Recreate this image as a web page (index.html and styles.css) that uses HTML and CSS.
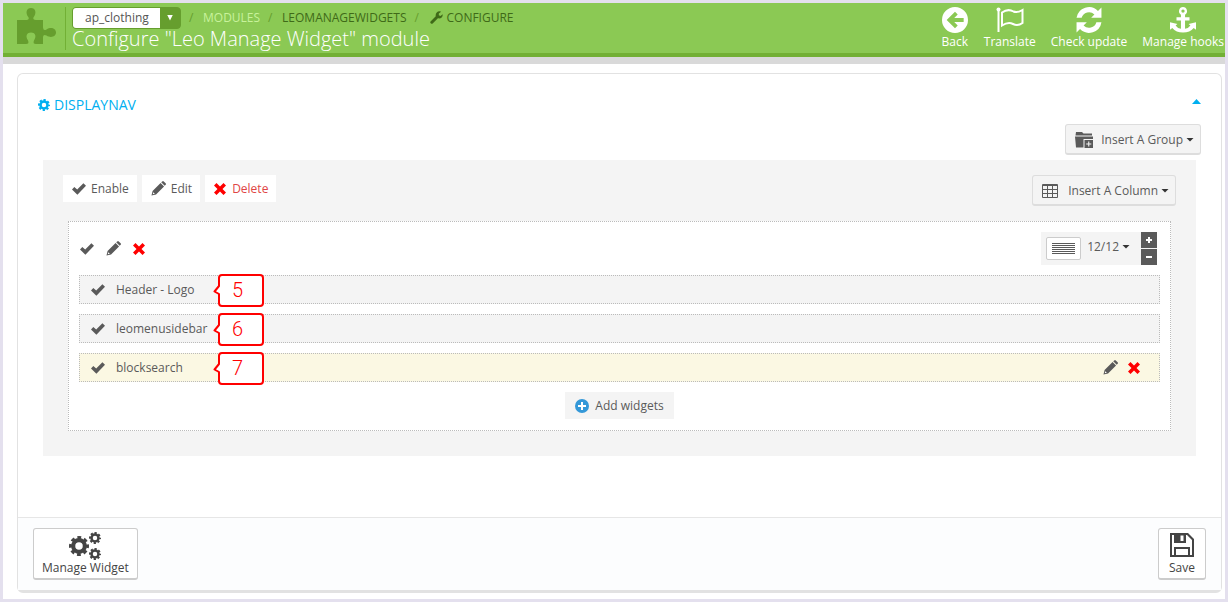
FILE: index.html
```html
<!DOCTYPE html>
<html lang="en">
<head>
    <meta charset="UTF-8">
    <meta name="viewport" content="width=device-width, initial-scale=1.0">
    <title>Configure "Leo Manage Widget" module</title>
    <link rel="stylesheet" href="styles.css">
</head>
<body>

<!-- icon set -->
<svg class="sprite" aria-hidden="true">
    <symbol id="i-check" viewBox="0 0 14 12"><path d="M0 6.600 2.300 4 5.200 6.400 11.400.2 14 2.800 5.400 11.800z"/></symbol>
    <symbol id="i-pencil" viewBox="0 0 16 16"><path d="M.5 15.500 1.700 10.600 10.200 2.100 13.900 5.800 5.400 14.300zM10.900 1.400 12 .4q.8-.7 1.600 0l2 2q.8.900 0 1.700l-1 1z"/><path d="M1.900 14.100l.5-2.200 1.700 1.700z" fill="#fff"/></symbol>
    <symbol id="i-remove" viewBox="0 0 12 12"><path d="M2.500 0 6 3.500 9.500 0 12 2.500 8.500 6 12 9.500 9.500 12 6 8.500 2.500 12 0 9.500 3.500 6 0 2.500z"/></symbol>
    <symbol id="i-gear" viewBox="0 0 24 24"><g fill="none" stroke="currentColor"><circle cx="12" cy="12" r="7" stroke-width="5"/><circle cx="12" cy="12" r="10" stroke-width="4" stroke-dasharray="4.400 3.454" stroke-dashoffset="2.200"/></g></symbol>
    <symbol id="i-wrench" viewBox="0 0 14 14"><path d="M.6 11.200 6.200 5.600C5.600 2.700 7.600.2 10.500.3L12 .7 9.500 2.600V4.500L11.200 5.300 13.700 3.600C14 6.700 11.500 8.700 8.500 7.900L2.900 13.500Q1.800 14.300.8 13.300T.6 11.200z"/></symbol>
    <symbol id="i-puzzle" viewBox="0 0 40 38"><path d="M1 13H10.500Q13.500 13 12.500 10.300C9 6 10.500 1 15 1S21 6 17.500 10.300Q16.500 13 20 13H27V20.500Q27.300 24.300 30.500 22.500C35 19.500 40 21.500 40 25.500S35 31.500 30.500 28.500Q27.300 27 27 30V37H20Q16.500 37 18 33.500C21 29 19 25.500 15 25.500S9 29 12 33.500Q13.500 37 10 37H1z"/></symbol>
    <symbol id="i-back" viewBox="0 0 24 24"><path fill-rule="evenodd" d="M12 0a12 12 0 1 0 0 24 12 12 0 0 0 0-24zM20 10.200V13.800H11.300L14.500 17.100 12 19.700 4.300 12 12 4.300 14.500 6.900 11.300 10.200z"/></symbol>
    <symbol id="i-flag" viewBox="0 0 28 26"><path fill="none" stroke="currentColor" stroke-width="2" d="M6 5.500C11 2 14 2.500 17.500 4.500 20.500 6 23 5 26.500 3V16C23 18.500 20 18.500 17 17 13 15 10 16 6 18.500z"/><path d="M1.500 3H3.500V25H1.500z"/><circle cx="2.500" cy="2.500" r="2"/></symbol>
    <symbol id="i-refresh" viewBox="0 0 24 24"><path d="M.5 10A11.700 11.700 0 0 1 20.300 3.600L23.500.5V10H14L17 7A7 7 0 0 0 5.200 10zM23.500 14A11.700 11.700 0 0 1 3.700 20.400L.5 23.500V14H10L7 17A7 7 0 0 0 18.800 14z"/></symbol>
    <symbol id="i-anchor" viewBox="0 0 28 28"><path fill-rule="evenodd" d="M14 0a4.500 4.500 0 0 1 2.200 8.300V11H21V14.500H16.200V23.300Q20.500 22.700 22 20L20 18.200 28 16.500V24.500L25.500 22.500Q21.500 27.500 14 27.500T2.500 22.500L0 24.500V16.500L8 18.200 6 20Q7.500 22.700 11.800 23.300V14.500H7V11H11.800V8.300A4.500 4.500 0 0 1 14 0zM14 2.600a1.800 1.800 0 1 0 0 3.600 1.800 1.800 0 0 0 0-3.600z"/></symbol>
    <symbol id="i-folder" viewBox="0 0 18 16"><path d="M1 0H7L8.500 1.500H17V3.500H.5zM0 4.500H18V7H8.500V15.500H1z"/><path fill-rule="evenodd" d="M9.500 8H18V16H9.500zM13.200 9.500V11.500H11.200V12.500H13.200V14.500H14.300V12.500H16.300V11.500H14.300V9.500z"/></symbol>
    <symbol id="i-grid" viewBox="0 0 16 14"><path fill="none" stroke="currentColor" d="M.5.5H15.500V13.500H.5zM0 1.500H16M0 5.500H16M0 9.500H16M5.500 1V14M10.500 1V14"/></symbol>
    <symbol id="i-lines" viewBox="0 0 23 12"><path fill="none" stroke="currentColor" d="M0 .5H23M0 2.500H23M0 4.500H23M0 6.500H23M0 8.500H23M0 10.500H23"/></symbol>
    <symbol id="i-plus-circle" viewBox="0 0 14 14"><circle cx="7" cy="7" r="7"/><path fill="#fff" d="M6 3H8V6H11V8H8V11H6V8H3V6H6z"/></symbol>
    <symbol id="i-save" viewBox="0 0 24 24"><path fill-rule="evenodd" d="M0 0H18L24 6V24H0zM2 2V22H22V7L17 2H16V10H4V2zM10.500 2.500V8H13.500V2.500z"/><path fill="none" stroke="currentColor" stroke-width="2" d="M5 23V15H19V23"/></symbol>
    <symbol id="i-callout" viewBox="0 0 51 33"><path fill="#fff" stroke="#f00" stroke-width="2" stroke-linejoin="round" d="M9 1H47Q50 1 50 4V29Q50 32 47 32H9Q6 32 6 29V20L1.500 17.500 6 12V4Q6 1 9 1z"/></symbol>
</svg>

<header class="page-head">
    <svg class="logo"><use href="#i-puzzle"/></svg>
    <div class="head-main">
        <div class="crumbs">
            <div class="select-box">
                <select aria-label="Shop">
                    <option>ap_clothing</option>
                </select>
                <span class="select-arrow"></span>
            </div>
            <span class="sep">/</span>
            <a href="#" class="faded">MODULES</a>
            <span class="sep">/</span>
            <a href="#">LEOMANAGEWIDGETS</a>
            <span class="sep">/</span>
            <a href="#"><svg class="icon-wrench"><use href="#i-wrench"/></svg>CONFIGURE</a>
        </div>
        <h1>Configure "Leo Manage Widget" module</h1>
    </div>
    <nav class="head-nav">
        <a href="#"><svg><use href="#i-back"/></svg>Back</a>
        <a href="#"><svg><use href="#i-flag"/></svg>Translate</a>
        <a href="#"><svg><use href="#i-refresh"/></svg>Check update</a>
        <a href="#"><svg><use href="#i-anchor"/></svg>Manage hooks</a>
    </nav>
</header>

<main class="panel">
    <div class="panel-body">
        <div class="panel-title">
            <h2><svg class="icon-gear"><use href="#i-gear"/></svg>DISPLAYNAV</h2>
            <button class="collapse" aria-label="Collapse"></button>
        </div>
        <div class="panel-tools">
            <button class="btn-insert"><svg class="icon-folder"><use href="#i-folder"/></svg>Insert A Group<span class="caret"></span></button>
        </div>

        <section class="group">
            <div class="group-bar">
                <div class="group-actions">
                    <button class="btn-plain"><svg class="icon-check"><use href="#i-check"/></svg>Enable</button>
                    <button class="btn-plain"><svg class="icon-pencil"><use href="#i-pencil"/></svg>Edit</button>
                    <button class="btn-plain danger"><svg class="icon-remove"><use href="#i-remove"/></svg>Delete</button>
                </div>
                <button class="btn-insert"><svg class="icon-grid"><use href="#i-grid"/></svg>Insert A Column<span class="caret"></span></button>
            </div>

            <div class="column">
                <div class="column-bar">
                    <div class="column-actions">
                        <button class="btn-icon" aria-label="Enable column"><svg class="icon-check"><use href="#i-check"/></svg></button>
                        <button class="btn-icon" aria-label="Edit column"><svg class="icon-pencil"><use href="#i-pencil"/></svg></button>
                        <button class="btn-icon" aria-label="Delete column"><svg class="icon-remove"><use href="#i-remove"/></svg></button>
                    </div>
                    <div class="column-size">
                        <button class="btn-lines" aria-label="Column layout"><svg class="icon-lines"><use href="#i-lines"/></svg></button>
                        <button class="btn-size">12/12<span class="caret"></span></button>
                        <div class="stepper">
                            <button class="plus" aria-label="Wider"></button>
                            <button aria-label="Narrower"></button>
                        </div>
                    </div>
                </div>

                <div class="widget">
                    <svg class="icon-check"><use href="#i-check"/></svg>
                    <span>Header - Logo</span>
                    <div class="callout"><svg><use href="#i-callout"/></svg><b>5</b></div>
                </div>
                <div class="widget">
                    <svg class="icon-check"><use href="#i-check"/></svg>
                    <span>leomenusidebar</span>
                    <div class="callout"><svg><use href="#i-callout"/></svg><b>6</b></div>
                </div>
                <div class="widget active">
                    <svg class="icon-check"><use href="#i-check"/></svg>
                    <span>blocksearch</span>
                    <div class="callout"><svg><use href="#i-callout"/></svg><b>7</b></div>
                    <div class="widget-actions">
                        <button class="btn-icon" aria-label="Edit widget"><svg class="icon-pencil"><use href="#i-pencil"/></svg></button>
                        <button class="btn-icon" aria-label="Delete widget"><svg class="icon-remove"><use href="#i-remove"/></svg></button>
                    </div>
                </div>

                <button class="btn-add"><svg class="icon-plus"><use href="#i-plus-circle"/></svg>Add widgets</button>
            </div>
        </section>
    </div>

    <footer class="panel-footer">
        <button class="btn-big">
            <span class="gears">
                <svg class="gear-large"><use href="#i-gear"/></svg>
                <span class="gears-small">
                    <svg><use href="#i-gear"/></svg>
                    <svg><use href="#i-gear"/></svg>
                </span>
            </span>
            Manage Widget
        </button>
        <button class="btn-big"><svg class="icon-save"><use href="#i-save"/></svg>Save</button>
    </footer>
</main>

</body>
</html>
```
FILE: styles.css
```css
* {
    box-sizing: border-box;
}
body {
    margin: 0;
    min-height: 100vh;
    border: 3px solid #e4e0ee;
    background: #fff;
    color: #5a5a5a;
    font-family: "Open Sans", sans-serif;
    font-size: 12px;
    line-height: 16px;
}
h1, h2 {
    margin: 0;
    font-weight: 400;
}
a {
    color: inherit;
    text-decoration: none;
}
button {
    display: flex;
    align-items: center;
    padding: 0;
    border: 0;
    background: none;
    color: inherit;
    font: inherit;
    white-space: nowrap;
    cursor: pointer;
}
svg {
    display: block;
    flex: none;
    fill: currentColor;
}
.sprite {
    position: absolute;
    width: 0;
    height: 0;
}

/* header */
.page-head {
    display: flex;
    height: 61px;
    background: #8bc954;
    border-bottom: 7px solid #d9d9d9;
    box-shadow: inset 0 -4px #72b035;
}
.logo {
    width: 40px;
    height: 38px;
    margin: 4px 9px 0 13px;
    color: #669e2e;
}
.head-main {
    flex: 1;
    height: 43px;
    margin-top: 4px;
    padding-left: 6px;
    border-left: 1px solid #72b035;
}
.crumbs {
    display: flex;
    align-items: center;
    height: 21px;
    color: #3f6a18;
}
.crumbs a {
    display: flex;
    align-items: center;
}
.crumbs .faded {
    color: #c8f29c;
}
.sep {
    width: 22px;
    padding-left: 8px;
    color: #669e2e;
}
.select-box {
    display: flex;
    width: 109px;
    height: 22px;
    border: 1px solid #669e2e;
    border-radius: 4px;
    background: #669e2e;
    overflow: hidden;
}
.select-box select {
    width: 87px;
    padding: 0 0 0 12px;
    border: 0;
    appearance: none;
    background: #fff;
    color: #555;
    font: inherit;
}
.select-arrow {
    margin: 7px 0 0 7px;
    width: 6px;
    height: 6px;
    background: #fff;
    clip-path: polygon(0 0, 100% 0, 50% 100%);
}
.icon-wrench {
    width: 13px;
    height: 13px;
    margin: 0 3px 0 2px;
}
h1 {
    color: #fff;
    font-size: 20px;
    font-weight: 300;
    line-height: 22px;
}
.head-nav {
    display: flex;
    gap: 15px;
    padding: 4px 1px 0 0;
    color: #fff;
}
.head-nav a {
    display: flex;
    flex-direction: column;
    align-items: center;
    gap: 1px;
}
.head-nav svg {
    width: 28px;
    height: 26px;
}

/* panel */
.panel {
    display: flex;
    flex-direction: column;
    min-height: 520px;
    margin: 9px 3px 6px 14px;
    border: 1px solid #e2e2e2;
    border-bottom: 3px solid #e2e2e2;
    border-radius: 6px;
}
.panel-body {
    flex: 1;
    padding: 20px 20px 0;
}
.panel-title {
    display: flex;
    justify-content: space-between;
    color: #00aff0;
}
.panel-title h2 {
    display: flex;
    align-items: center;
    font-size: 14px;
    line-height: 22px;
}
.icon-gear {
    width: 12px;
    height: 12px;
    margin-right: 4px;
}
.collapse {
    width: 9px;
    height: 5px;
    margin-top: 5px;
    background: #00aff0;
    clip-path: polygon(50% 0, 100% 100%, 0 100%);
}
.panel-tools {
    display: flex;
    justify-content: flex-end;
    margin-top: 8px;
}
.btn-insert {
    height: 31px;
    padding: 1px 6px 0 9px;
    border: 1px solid #ddd;
    border-bottom-width: 2px;
    border-radius: 3px;
    background: #f4f4f4;
}
.caret {
    width: 8px;
    height: 4px;
    margin-left: 3px;
    background: #333;
    clip-path: polygon(0 0, 100% 0, 50% 100%);
}
.icon-folder {
    width: 18px;
    height: 16px;
    margin-right: 8px;
}
.icon-grid {
    width: 16px;
    height: 14px;
    margin-right: 10px;
}

/* group */
.group {
    margin: 5px 5px 0;
    padding: 15px 25px 25px;
    background: #f4f4f4;
}
.group-bar {
    display: flex;
    justify-content: space-between;
    align-items: flex-start;
    margin: 0 -5px 15px;
}
.group-actions {
    display: flex;
    gap: 5px;
}
.btn-plain {
    height: 27px;
    padding: 0 8px 0 9px;
    background: #fff;
}
.btn-plain svg {
    margin-right: 5px;
}
.danger {
    color: #e04545;
}
.icon-check {
    width: 14px;
    height: 12px;
}
.icon-pencil {
    width: 15px;
    height: 15px;
}
.icon-remove {
    width: 12px;
    height: 12px;
    color: #f00;
}
.danger .icon-remove {
    margin-right: 6px;
}

/* column */
.column {
    padding: 10px 10px 11px;
    border: 1px dotted #bbb;
    background: #fff;
}
.column-bar {
    display: flex;
    justify-content: space-between;
    margin-bottom: 10px;
}
.column-actions {
    display: flex;
    align-items: center;
    gap: 12px;
    padding-left: 1px;
}
.column-size {
    display: flex;
    align-items: center;
    height: 33px;
    margin-right: 3px;
    padding-left: 5px;
    background: #f4f4f4;
}
.btn-lines {
    justify-content: center;
    width: 35px;
    height: 23px;
    border: 1px solid #ccc;
    border-radius: 2px;
    background: #fff;
}
.icon-lines {
    width: 23px;
    height: 12px;
}
.btn-size {
    height: 28px;
    padding: 0 11px 4px 6px;
}
.stepper {
    display: flex;
    flex-direction: column;
    gap: 1px;
}
.stepper button {
    width: 16px;
    height: 16px;
    background: linear-gradient(#fff, #fff) center / 6px 2px no-repeat #5a5a5a;
}
.stepper .plus {
    background: linear-gradient(#fff, #fff) center / 6px 2px no-repeat, linear-gradient(#fff, #fff) center / 2px 6px no-repeat #5a5a5a;
}

/* widgets */
.widget {
    display: flex;
    align-items: center;
    gap: 11px;
    position: relative;
    height: 29px;
    margin-bottom: 10px;
    padding: 0 19px 0 11px;
    border: 1px dotted #bbb;
    background: #f4f4f4;
}
.widget.active {
    background: #fbf8e3;
}
.widget-actions {
    display: flex;
    gap: 10px;
    margin-left: auto;
}
.callout {
    position: absolute;
    left: 133px;
    top: -2px;
    width: 51px;
    height: 33px;
}
.callout svg {
    width: 51px;
    height: 33px;
}
.callout b {
    position: absolute;
    inset: 0 2px 0 0;
    color: #f00;
    font-family: Roboto, sans-serif;
    font-size: 20px;
    font-weight: 300;
    line-height: 33px;
    text-align: center;
}
.btn-add {
    height: 27px;
    margin: 0 auto;
    padding: 0 10px;
    background: #f4f4f4;
}
.icon-plus {
    width: 14px;
    height: 14px;
    margin-right: 6px;
    color: #3498d8;
}

/* footer */
.panel-footer {
    display: flex;
    justify-content: space-between;
    padding: 10px 15px;
    border-top: 1px solid #e6e6e6;
    background: #fcfdfe;
}
.btn-big {
    flex-direction: column;
    justify-content: space-between;
    height: 52px;
    padding: 3px 8px 2px;
    border: 1px solid #ccc;
    border-bottom-width: 2px;
    border-radius: 3px;
    background: #fff;
    color: #444;
}
.gears {
    display: flex;
    align-items: center;
    height: 28px;
}
.gear-large {
    width: 20px;
    height: 20px;
}
.gears-small {
    display: flex;
    flex-direction: column;
    gap: 4px;
}
.gears-small svg {
    width: 12px;
    height: 12px;
}
.icon-save {
    width: 24px;
    height: 24px;
    margin: 1px 3px 0;
}
```
